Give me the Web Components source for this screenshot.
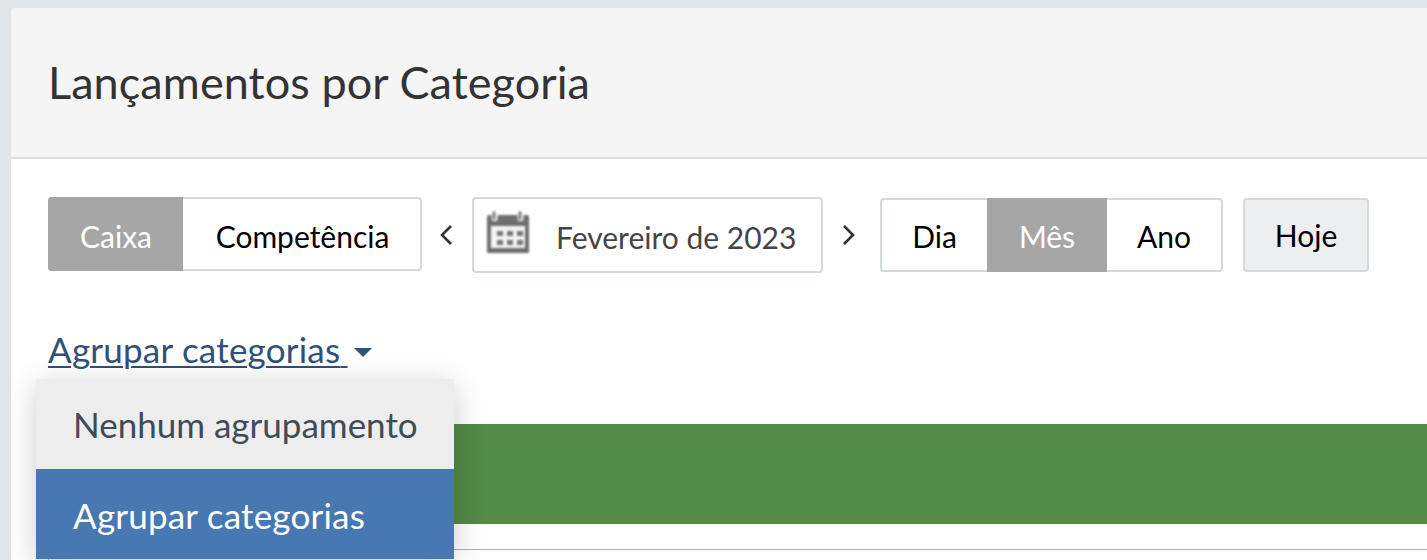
<!DOCTYPE html>
<html lang="pt-BR">
<head>
<meta charset="utf-8">
<title>Lançamentos por Categoria</title>
<style>
html,body{margin:0;height:560px;overflow:hidden;background:#dfe5e8;font-family:Lato,"Open Sans",sans-serif}
body{display:flow-root;padding:8px 0 0 11px;box-sizing:border-box}
</style>
</head>
<body>
<lc-panel>
  <span slot="title">Lançamentos por Categoria</span>
  <lc-toolbar>
    <lc-seg style="--w:374px;--h:74px;--pt:4px">
      <lc-opt active style="--bw:135px;padding-left:1px">Caixa</lc-opt>
      <lc-opt style="--bw:239px">Competência</lc-opt>
    </lc-seg>
    <lc-date>Fevereiro de 2023</lc-date>
    <lc-seg style="--w:343px;--h:74px;--pt:2px;margin-top:1px">
      <lc-opt style="--bw:107px;padding-left:2px">Dia</lc-opt>
      <lc-opt active style="--bw:120px">Mês</lc-opt>
      <lc-opt style="--bw:116px;padding-right:2px">Ano</lc-opt>
    </lc-seg>
    <lc-today>Hoje</lc-today>
  </lc-toolbar>
  <lc-group label="Agrupar categorias">
    <lc-item>Nenhum agrupamento</lc-item>
    <lc-item selected>Agrupar categorias</lc-item>
  </lc-group>
  <lc-report></lc-report>
</lc-panel>
<script>
function def(name, html, init){
  const t=document.createElement('template');t.innerHTML=html;
  customElements.define(name,class extends HTMLElement{
    constructor(){super();this.attachShadow({mode:'open'}).appendChild(t.content.cloneNode(true));}
    connectedCallback(){ if(init) init(this); }
  });
}
def('lc-panel',`<style>
:host{display:block;background:#fff;border-radius:4px 0 0 0;height:552px;overflow:hidden;color:#333}
header{box-sizing:border-box;height:151px;background:#f5f5f5;border-bottom:2px solid #dfdfdf;display:flex;align-items:center;padding:0 0 2px 37px;font-size:45px;letter-spacing:.07px;line-height:48px;color:#333}
.b{padding:38px 0 0 37px;position:relative}
</style><header><slot name="title"></slot></header><div class="b"><slot></slot></div>`);
def('lc-toolbar',`<style>:host{display:flex;align-items:flex-start}</style><slot></slot>`);
def('lc-seg',`<style>
:host{display:flex;width:var(--w);height:var(--h);box-sizing:border-box;border:2px solid #d3dade;border-radius:4px;background:#fff}
</style><slot></slot>`);
def('lc-opt',`<style>
:host{display:flex;align-items:center;justify-content:center;width:var(--bw);flex:none;font-size:30px;color:#000;box-sizing:border-box;margin:-2px 0;padding-top:var(--pt)}
:host(:first-child){margin-left:-2px}
:host(:last-child){margin-right:-2px}
:host([active]){background:#a6a6a6;color:#fff}
:host([active]:first-child){border-radius:4px 0 0 4px}
</style><slot></slot>`);
def('lc-date',`<style>
:host{display:flex;align-items:flex-start;margin-left:14px}
.nav{height:76px;display:flex;align-items:center;box-sizing:border-box}
.box{width:351px;height:76px;box-sizing:border-box;border:2px solid #d3dade;border-radius:4px;display:flex;align-items:center;color:#444;font-size:30px;padding-left:12px}
svg.cal{width:44px;height:44px;margin:-4px 26px 0 0;flex:none;filter:blur(1px)}
svg.c{width:14px;height:24px}
.nav.r{width:57px;padding-left:19px}
.nav.l{width:36px;padding-left:3px}
.t{margin-top:4px}
</style>
<div class="nav l"><svg class="c" viewBox="0 0 14 24"><path d="M12 3 3 12l9 9" fill="none" stroke="#333" stroke-width="2.6"/></svg></div>
<div class="box"><svg class="cal" viewBox="0 0 44 44"><path fill="#6f6f6f" d="M3 4h2.500v3a3 3 0 0 0 6 .5V4h20v3.500a3 3 0 0 0 6-.5V4H41a2 2 0 0 1 2 2v36H1V6a2 2 0 0 1 2-2z"/><rect x="5" y="15" width="34" height="22" fill="#f4f4f4"/><g fill="#777"><rect x="11" y="20" width="6" height="5"/><rect x="21" y="20" width="6" height="5"/><rect x="31" y="20" width="6" height="5"/><rect x="11" y="29" width="6" height="5"/><rect x="21" y="29" width="6" height="5"/><rect x="31" y="29" width="6" height="5"/></g><rect x="6.500" y="0" width="3" height="9" rx="1.500" fill="#808080"/><rect x="32.500" y="0" width="3" height="9" rx="1.500" fill="#808080"/></svg><span class="t"><slot></slot></span></div>
<div class="nav r"><svg class="c" viewBox="0 0 14 24"><path d="M2 3l9 9-9 9" fill="none" stroke="#333" stroke-width="2.6"/></svg></div>`);
def('lc-today',`<style>
:host{display:flex;align-items:center;justify-content:center;width:126px;height:74px;box-sizing:border-box;margin:1px 0 0 20px;border:2px solid #d3dade;border-radius:4px;background:#eceef0;color:#000;font-size:30px}
</style><slot></slot>`);
def('lc-group',`<style>
:host{display:block;position:relative;margin-top:54px;height:56px}
a{color:#2f5079;font-size:35px;letter-spacing:.22px;line-height:44px;display:inline-flex;align-items:center;text-decoration:underline;text-decoration-thickness:2px;text-underline-offset:3px}
.s{letter-spacing:-1.8px}
i{display:inline-block;width:0;height:0;border:9px solid transparent;border-top:9px solid #2f5079;border-bottom:0;margin-left:6px;position:relative;top:-6px}
.m{position:absolute;left:-12px;top:52px;width:418px;z-index:2;box-shadow:0 6px 28px rgba(0,0,0,.2)}
</style><a><span id="l"></span><span class="s">&nbsp;</span></a><i></i><div class="m"><slot></slot></div>`,el=>{el.shadowRoot.getElementById('l').textContent=el.getAttribute('label')});
def('lc-item',`<style>
:host{display:flex;align-items:center;height:90px;padding-left:37px;box-sizing:border-box;background:#ededed;color:#3d4c55;font-size:35px}
:host([selected]){background:#4878b2;color:#fff;letter-spacing:.2px;padding-top:2px}
</style><slot></slot>`);
def('lc-report',`<style>
:host{display:block;margin-top:41px}
.g{height:100px;background:#538a46}
.l{margin-top:25px;border-top:1px solid #a9b5cc;border-left:1px solid #a9b5cc;height:30px}
</style><div class="g"></div><div class="l"></div>`);
</script>
</body>
</html>
